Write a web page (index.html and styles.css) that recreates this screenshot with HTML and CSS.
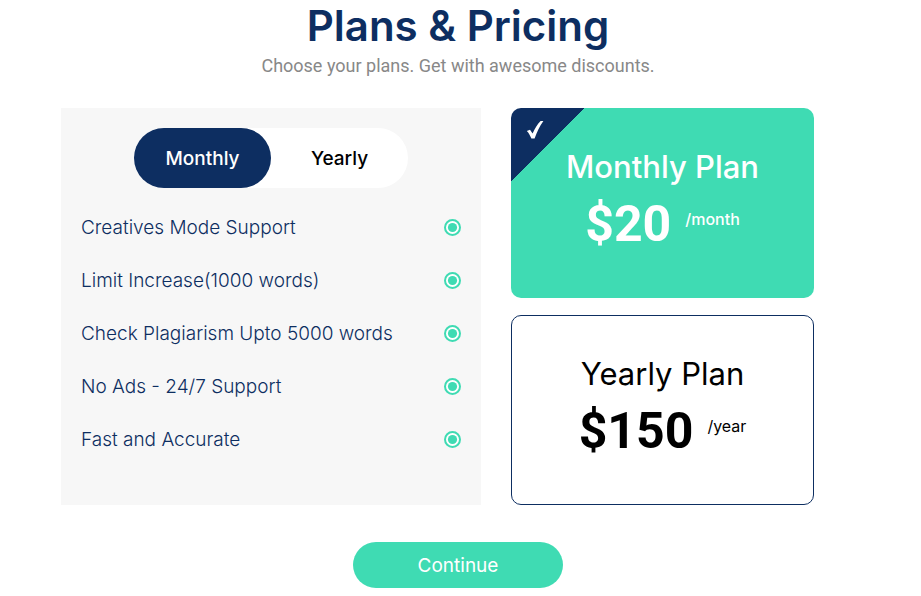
FILE: index.html
```html
<!DOCTYPE html>
<html lang="en">
<head>
    <meta charset="UTF-8">
    <meta name="viewport" content="width=device-width, initial-scale=1.0">
    <title>Plans & Pricing</title>
    <link rel="stylesheet" href="styles.css">
</head>
<body>
    <header class="heading">
        <h1>Plans &amp; Pricing</h1>
        <p>Choose your plans. Get with awesome discounts.</p>
    </header>

    <form class="pricing">
        <div class="plans">
            <section class="features">
                <div class="toggle">
                    <button type="button" class="active" data-plan="monthly">Monthly</button>
                    <button type="button" data-plan="yearly">Yearly</button>
                </div>
                <ul>
                    <li>Creatives Mode Support
                        <svg viewBox="0 0 17 17"><circle class="ring" cx="8.5" cy="8.5" r="7.5"/><circle class="dot" cx="8.5" cy="8.5" r="4.6"/></svg></li>
                    <li>Limit Increase(1000 words)
                        <svg viewBox="0 0 17 17"><circle class="ring" cx="8.5" cy="8.5" r="7.5"/><circle class="dot" cx="8.5" cy="8.5" r="4.6"/></svg></li>
                    <li>Check Plagiarism Upto 5000 words
                        <svg viewBox="0 0 17 17"><circle class="ring" cx="8.5" cy="8.5" r="7.5"/><circle class="dot" cx="8.5" cy="8.5" r="4.6"/></svg></li>
                    <li>No Ads - 24/7 Support
                        <svg viewBox="0 0 17 17"><circle class="ring" cx="8.5" cy="8.5" r="7.5"/><circle class="dot" cx="8.5" cy="8.5" r="4.6"/></svg></li>
                    <li>Fast and Accurate
                        <svg viewBox="0 0 17 17"><circle class="ring" cx="8.5" cy="8.5" r="7.5"/><circle class="dot" cx="8.5" cy="8.5" r="4.6"/></svg></li>
                </ul>
            </section>

            <div class="cards">
                <input type="radio" name="plan" id="monthly" checked>
                <label class="card" for="monthly">
                    <svg class="check" viewBox="0 0 18 20"><path d="M0.8 11 L4 9.8 L6.600 13.600 C9 8.2 11.400 4.200 14.600 1 L17.400 1 C13.600 6.200 11 11.800 8.600 18.600 L5.400 18.600 C4.200 15.600 2.800 13 0.800 11 Z"/></svg>
                    <span class="name">Monthly Plan</span>
                    <span class="price"><b>$20</b><small>/month</small></span>
                </label>
                <input type="radio" name="plan" id="yearly">
                <label class="card" for="yearly">
                    <svg class="check" viewBox="0 0 18 20"><path d="M0.8 11 L4 9.8 L6.600 13.600 C9 8.2 11.400 4.200 14.600 1 L17.400 1 C13.600 6.200 11 11.800 8.600 18.600 L5.400 18.600 C4.200 15.600 2.800 13 0.800 11 Z"/></svg>
                    <span class="name">Yearly Plan</span>
                    <span class="price"><b>$150</b><small>/year</small></span>
                </label>
            </div>
        </div>

        <button type="submit" class="continue">Continue</button>
    </form>

    <script>
        const tabs = document.querySelectorAll('.toggle button');
        const plans = document.querySelectorAll('input[name="plan"]');

        function selectPlan(plan) {
            document.getElementById(plan).checked = true;
            for (const tab of tabs) {
                tab.classList.toggle('active', tab.dataset.plan === plan);
            }
        }

        for (const tab of tabs) {
            tab.addEventListener('click', () => selectPlan(tab.dataset.plan));
        }
        for (const input of plans) {
            input.addEventListener('change', () => selectPlan(input.id));
        }
    </script>
</body>
</html>
```
FILE: styles.css
```css
* {
    box-sizing: border-box;
}
body {
    font-family: Inter, sans-serif;
    background-color: #fff;
    margin: 0;
    padding: 0 5px 8px 0;
}
.heading {
    text-align: center;
}
h1 {
    font-size: 42px;
    font-weight: 600;
    line-height: 52px;
    margin: 0;
    color: #0d2e61;
}
.heading p {
    font-family: Roboto, sans-serif;
    font-size: 18px;
    line-height: 28px;
    margin: 0;
    color: #888;
}
.pricing {
    padding: 28px 0 0;
    text-align: center;
}
.plans {
    display: grid;
    grid-template-columns: 420fr 303fr;
    gap: 30px;
    padding: 0 102px 0 61px;
    text-align: left;
}
.features {
    background-color: #f7f7f7;
    padding: 20px 20px 38px;
}
.toggle {
    display: flex;
    width: 274px;
    margin: 0 auto;
    border-radius: 30px;
    background-color: #fff;
}
.toggle button {
    flex: 1;
    height: 60px;
    border: none;
    border-radius: 30px;
    background: none;
    font-family: inherit;
    font-size: 19px;
    font-weight: 500;
    color: #000;
    cursor: pointer;
}
.toggle .active {
    background-color: #0d2e61;
    color: #fff;
}
.features ul {
    list-style: none;
    margin: 13px 0 0;
    padding: 0;
}
.features li {
    display: flex;
    align-items: center;
    justify-content: space-between;
    min-height: 53px;
    font-size: 19px;
    font-weight: 300;
    color: #0d2e61;
}
.features li svg {
    width: 17px;
    height: 17px;
    flex: none;
}
.ring {
    fill: #fff;
    stroke: #3fdbb3;
    stroke-width: 2;
}
.dot {
    fill: #3fdbb3;
}
.cards {
    display: flex;
    flex-direction: column;
    gap: 17px;
}
/* the radio stays focusable, the card is its label */
.cards input {
    position: absolute;
    opacity: 0;
}
.card {
    position: relative;
    flex: 1;
    min-height: 190px;
    padding-top: 38px;
    border: 1px solid #0d2e61;
    border-radius: 10px;
    text-align: center;
    color: #000;
    cursor: pointer;
}
.cards input:checked + .card {
    border: none;
    padding-top: 39px;
    background: linear-gradient(135deg, #0d2e61 52px, #3fdbb3 52px);
    color: #fff;
}
.check {
    display: none;
    position: absolute;
    top: 12px;
    left: 15px;
    width: 18px;
    height: 20px;
    fill: #fff;
}
.cards input:checked + .card .check {
    display: block;
}
.name {
    display: block;
    font-size: 31px;
    font-weight: 400;
    line-height: 40px;
}
.cards input:checked + .card .name,
.cards input:checked + .card small {
    font-weight: 500;
}
.price {
    display: flex;
    justify-content: center;
    gap: 14px;
}
.price b {
    font-family: Roboto, sans-serif;
    font-size: 50px;
    line-height: 74px;
}
.price small {
    font-size: 16px;
    line-height: 64px;
}
.continue {
    width: 210px;
    height: 46px;
    margin-top: 37px;
    border: none;
    border-radius: 23px;
    background-color: #3fdbb3;
    font-family: inherit;
    font-size: 19px;
    color: #fff;
    cursor: pointer;
}
```
